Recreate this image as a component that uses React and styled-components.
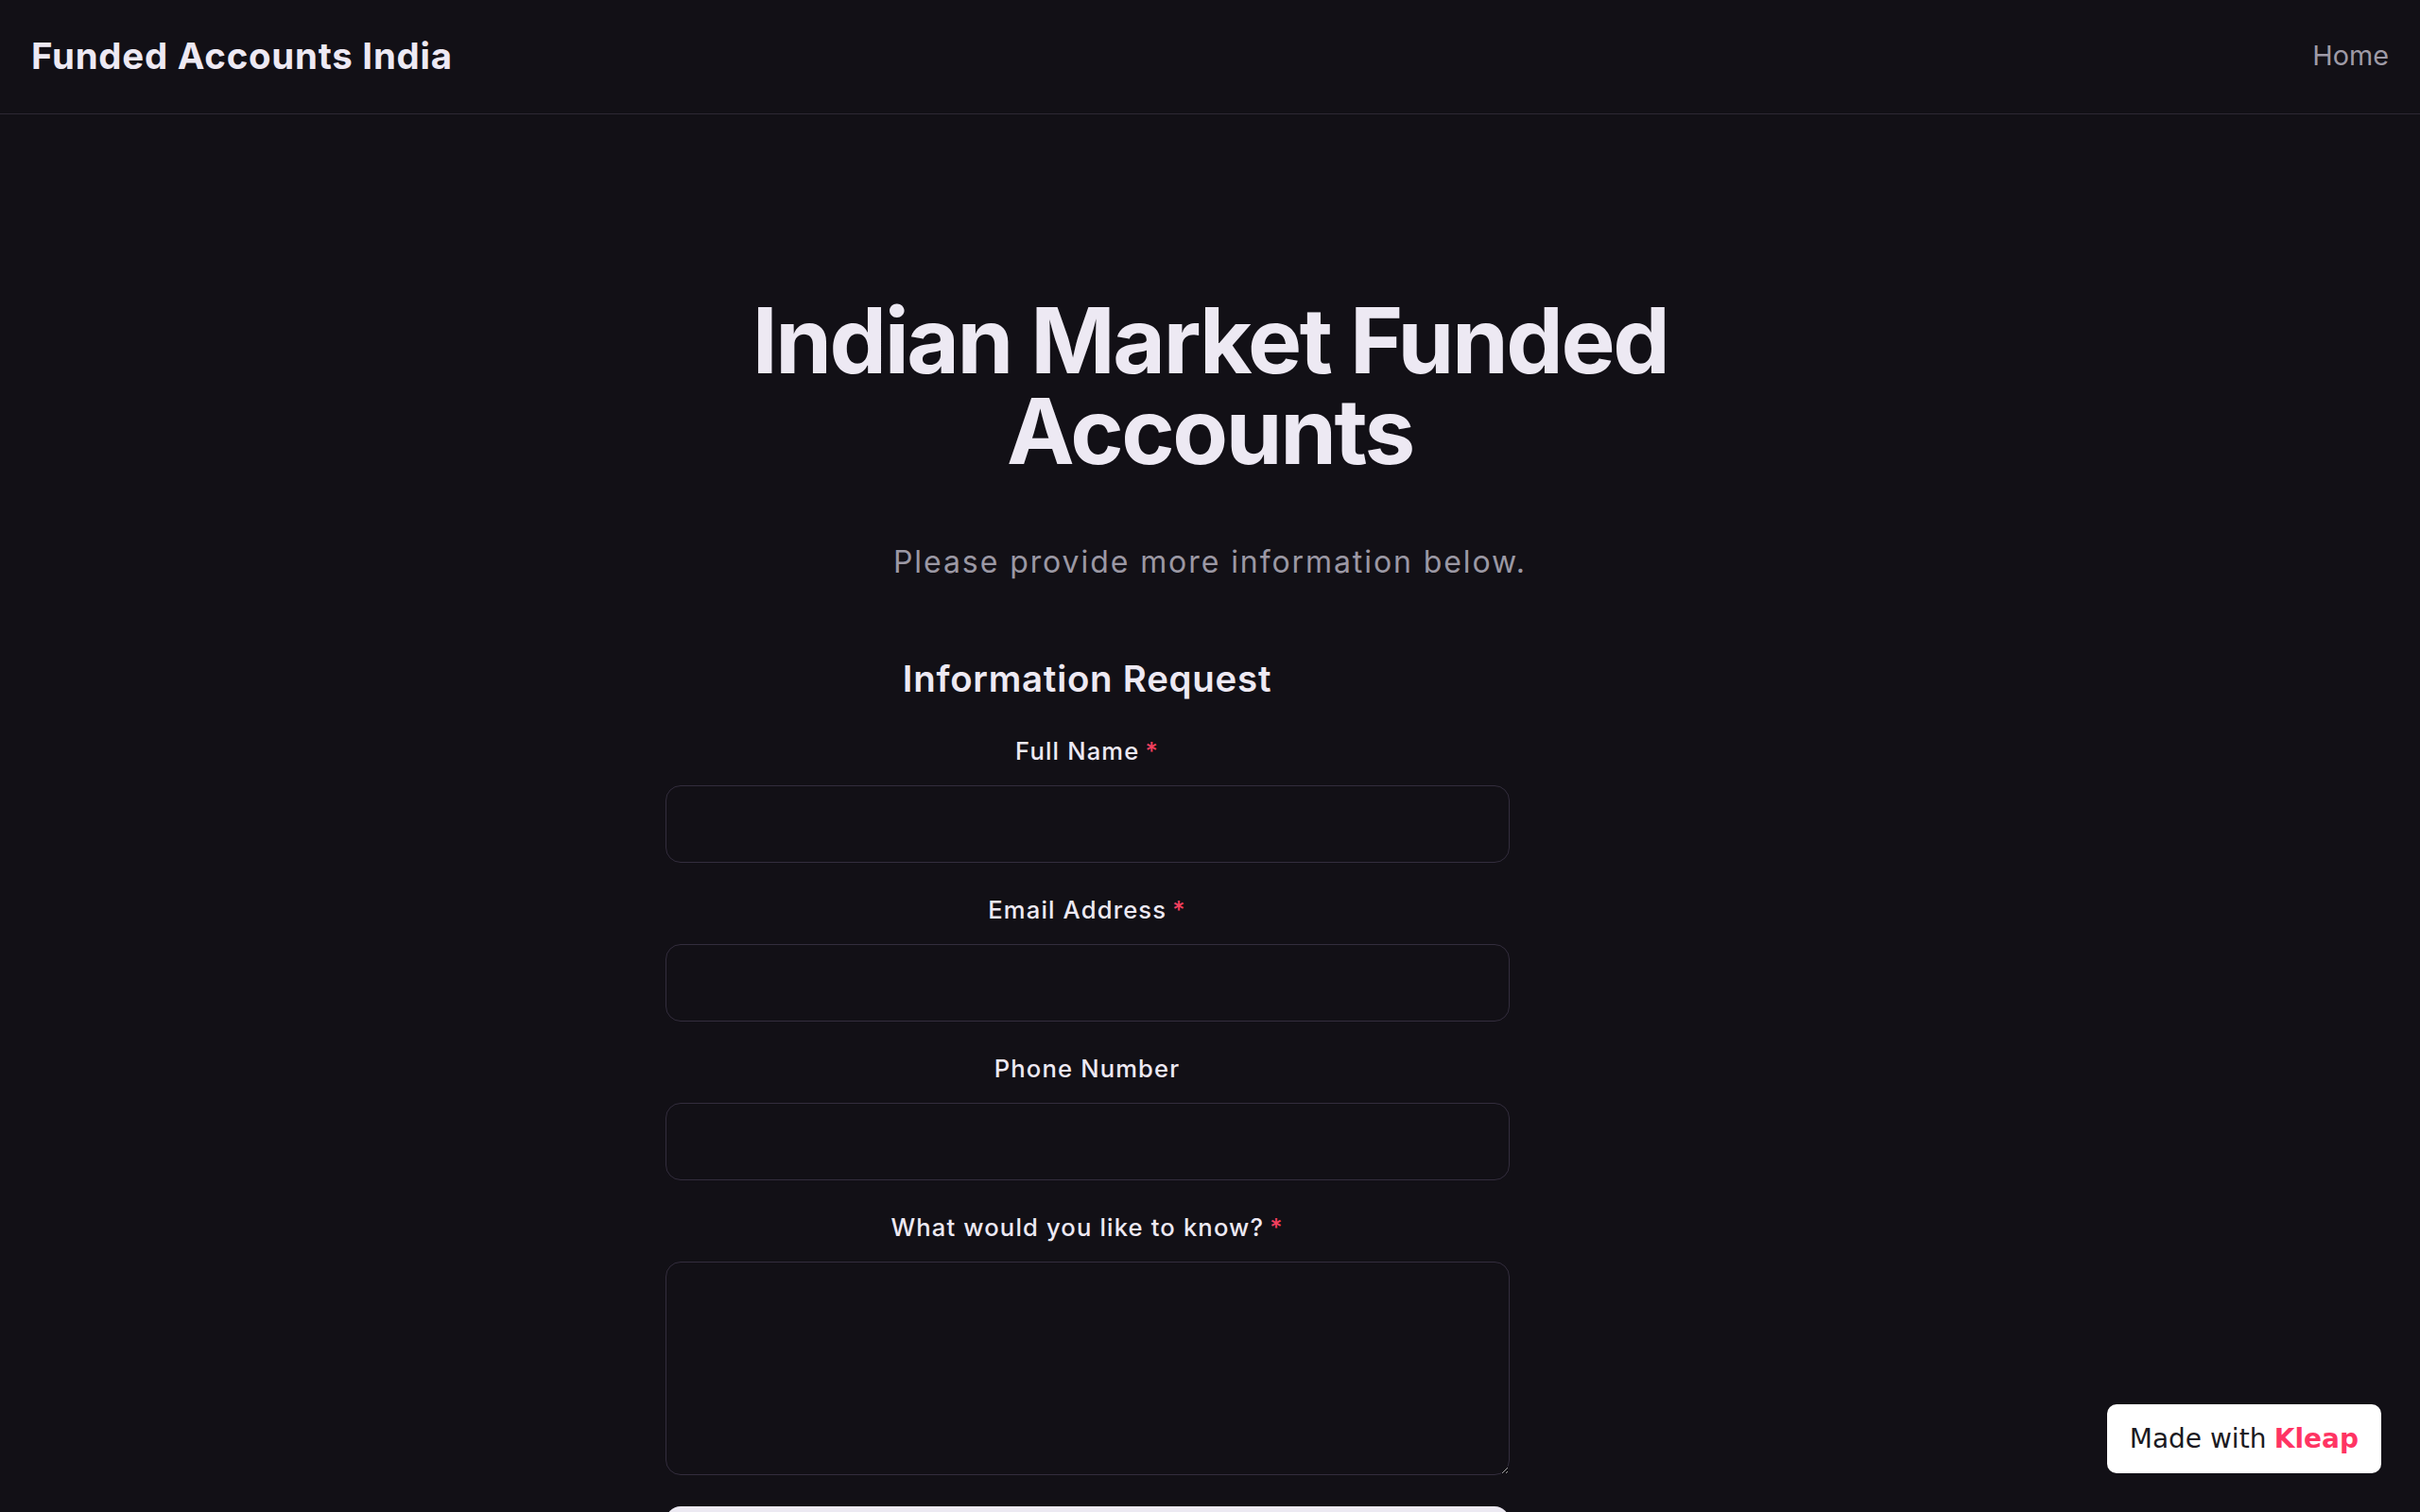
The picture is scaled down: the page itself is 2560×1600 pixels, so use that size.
import styled, { createGlobalStyle } from "styled-components";

const GlobalStyle = createGlobalStyle`
  * {
    box-sizing: border-box;
  }
  body {
    margin: 0;
    background: #121016;
    font-family: Inter, "Noto Sans", sans-serif;
    color: #ede9f3;
  }
`;

const Page = styled.div`
  min-height: 100vh;
  background: #121016;
`;

const Header = styled.header`
  height: 121px;
  padding: 0 33px;
  display: flex;
  align-items: center;
  justify-content: space-between;
  border-bottom: 1.6px solid #2c2833;
`;

const Logo = styled.a`
  font-size: 38.4px;
  font-weight: 700;
  letter-spacing: 0.02em;
  color: #ede9f3;
  text-decoration: none;
  margin-top: -2px;
`;

const NavLink = styled.a`
  font-size: 28.8px;
  color: #9e9aa6;
  text-decoration: none;
  margin-top: -4px;
`;

const Main = styled.main`
  max-width: 1229px;
  margin: 0 auto;
  padding: 191px 38px 0;
`;

const Title = styled.h1`
  margin: 0;
  font-size: 96px;
  line-height: 96px;
  font-weight: 700;
  letter-spacing: -0.025em;
  text-align: center;
  color: #ede9f3;
`;

const Subtitle = styled.p`
  margin: 69px 0 0;
  font-size: 32px;
  line-height: 44.8px;
  letter-spacing: 0.06em;
  text-align: center;
  color: #9b98a4;
`;

const Form = styled.form`
  width: 893px;
  margin-top: 75px;
  display: flex;
  flex-direction: column;
  gap: 31px;
`;

const FormTitle = styled.h2`
  margin: 0 0 1px;
  font-size: 38.4px;
  line-height: 51px;
  font-weight: 600;
  letter-spacing: 0.02em;
  text-align: center;
  color: #ede9f3;
`;

const Field = styled.div`
  display: flex;
  flex-direction: column;
`;

const Label = styled.label`
  font-size: 25.6px;
  line-height: 38px;
  font-weight: 500;
  letter-spacing: 0.045em;
  text-align: center;
  color: #ede9f3;
  margin-bottom: 17px;
`;

const Required = styled.span`
  color: #f43f5e;
  margin-left: 6px;
`;

const Input = styled.input`
  height: 82px;
  width: 100%;
  padding: 0 20px;
  background: #121016;
  border: 1.6px solid #332d3d;
  border-radius: 16px;
  color: #ede9f3;
  font-family: inherit;
  font-size: 25.6px;
  outline: none;
`;

const TextArea = styled.textarea`
  height: 226px;
  width: 100%;
  padding: 16px 20px;
  background: #121016;
  border: 1.6px solid #332d3d;
  border-radius: 16px;
  color: #ede9f3;
  font-family: inherit;
  font-size: 25.6px;
  outline: none;
`;

const Submit = styled.button`
  margin-top: 2px;
  height: 82px;
  width: 100%;
  border: none;
  border-radius: 16px;
  background: #ece9f2;
  color: #121016;
  font-family: inherit;
  font-size: 25.6px;
  font-weight: 600;
`;

const Badge = styled.a`
  position: fixed;
  right: 41px;
  bottom: 41px;
  height: 73px;
  padding: 0 24px;
  display: flex;
  align-items: center;
  background: #ffffff;
  border-radius: 10px;
  font-family: "DejaVu Sans", sans-serif;
  font-size: 28px;
  color: #1b1a22;
  text-decoration: none;
`;

const Brand = styled.strong`
  color: #ff3463;
  margin-left: 0.3em;
`;

const fields = [
  { label: "Full Name", required: true },
  { label: "Email Address", required: true },
  { label: "Phone Number", required: false },
];

const App = () => {
  return (
    <Page>
      <GlobalStyle />
      <Header>
        <Logo href="#">Funded Accounts India</Logo>
        <NavLink href="#">Home</NavLink>
      </Header>
      <Main>
        <Title>Indian Market Funded Accounts</Title>
        <Subtitle>Please provide more information below.</Subtitle>
        <Form onSubmit={(e) => e.preventDefault()}>
          <FormTitle>Information Request</FormTitle>
          {fields.map((f) => (
            <Field key={f.label}>
              <Label>
                {f.label}
                {f.required && <Required>*</Required>}
              </Label>
              <Input />
            </Field>
          ))}
          <Field>
            <Label>
              What would you like to know?
              <Required>*</Required>
            </Label>
            <TextArea />
          </Field>
          <Submit type="submit">Submit</Submit>
        </Form>
      </Main>
      <Badge href="#">
        Made with <Brand>Kleap</Brand>
      </Badge>
    </Page>
  );
};

export default App;
